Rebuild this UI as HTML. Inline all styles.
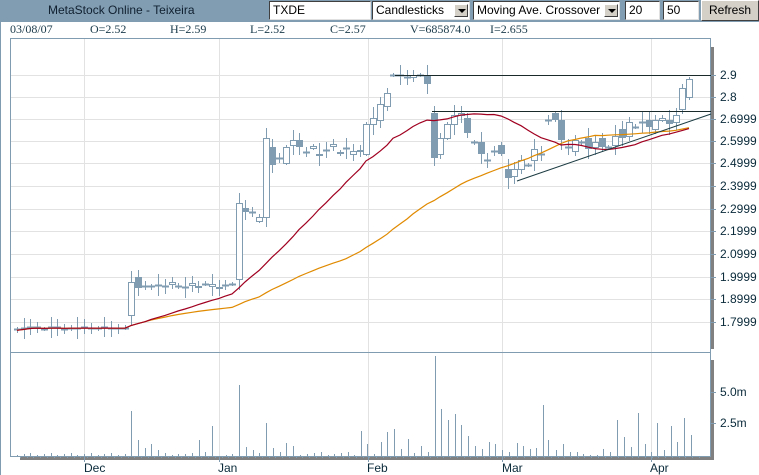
<!DOCTYPE html>
<html><head><meta charset="utf-8"><style>
body{margin:0;width:759px;height:475px;overflow:hidden;background:#fff;font-family:"Liberation Sans",sans-serif;position:relative}
.bar{position:absolute;left:0;top:0;width:759px;height:21px;background:#819db2}
.title{position:absolute;left:48px;top:3px;font-size:12px;color:#102030}
.box{position:absolute;top:1px;height:19px;background:#fff;border:1px solid;border-color:#404040 #e0e0e0 #e0e0e0 #404040;box-sizing:border-box;font-size:12px;padding:1px 3px;color:#000}
.arr{position:absolute;top:2px;right:1px;width:14px;height:13px;background:#d4d0c8;border:1px solid;border-color:#fff #404040 #404040 #fff;box-sizing:border-box}
.arr:after{content:"";position:absolute;left:3px;top:4px;border:4px solid transparent;border-top:4px solid #000;border-bottom:0}
.btn{position:absolute;left:701px;top:0;width:58px;height:21px;background:#d4d0c8;border:1px solid;border-color:#fff #404040 #404040 #fff;box-sizing:border-box;font-size:12px;text-align:center;line-height:18px}
.info{position:absolute;top:22px;font-family:"Liberation Serif",serif;font-size:12px;color:#1a3a4a}
.lab{position:absolute;font-size:12px;color:#0a2a3a}
</style></head><body>
<div class="bar"><div class="title">MetaStock Online - Teixeira</div></div>
<div class="box" style="left:269px;width:102px">TXDE</div>
<div class="box" style="left:372px;width:98px">Candlesticks<div class="arr"></div></div>
<div class="box" style="left:473px;width:147px">Moving Ave. Crossover<div class="arr"></div></div>
<div class="box" style="left:625px;width:35px">20</div>
<div class="box" style="left:663px;width:36px">50</div>
<div class="btn">Refresh</div>
<div class="info" style="left:10px">03/08/07</div>
<div class="info" style="left:90px">O=2.52</div>
<div class="info" style="left:170px">H=2.59</div>
<div class="info" style="left:250px">L=2.52</div>
<div class="info" style="left:330px">C=2.57</div>
<div class="info" style="left:410px">V=685874.0</div>
<div class="info" style="left:490px">I=2.655</div>
<svg id="s" width="759" height="475" style="position:absolute;left:0;top:0" shape-rendering="crispEdges"></svg>
<div class="lab" style="left:720px;top:68px">2.9</div>
<div class="lab" style="left:720px;top:90px">2.8</div>
<div class="lab" style="left:720px;top:112px">2.6999</div>
<div class="lab" style="left:720px;top:134px">2.5999</div>
<div class="lab" style="left:720px;top:156px">2.4999</div>
<div class="lab" style="left:720px;top:179px">2.3999</div>
<div class="lab" style="left:720px;top:202px">2.2999</div>
<div class="lab" style="left:720px;top:224px">2.1999</div>
<div class="lab" style="left:720px;top:247px">2.0999</div>
<div class="lab" style="left:720px;top:270px">1.9999</div>
<div class="lab" style="left:720px;top:292px">1.8999</div>
<div class="lab" style="left:720px;top:315px">1.7999</div>
<div class="lab" style="left:720px;top:385px">5.0m</div>
<div class="lab" style="left:720px;top:416px">2.5m</div>
<div class="lab" style="left:84px;top:461px">Dec</div>
<div class="lab" style="left:218px;top:461px">Jan</div>
<div class="lab" style="left:367px;top:461px">Feb</div>
<div class="lab" style="left:502px;top:461px">Mar</div>
<div class="lab" style="left:650px;top:461px">Apr</div>
<script>
var s=document.getElementById('s'),h='';
function L(x1,y1,x2,y2,c,w){h+='<line x1="'+x1+'" y1="'+y1+'" x2="'+x2+'" y2="'+y2+'" stroke="'+c+'" stroke-width="'+(w||1)+'"/>';}
function R(x,y,w,hh,f,st){h+='<rect x="'+x+'" y="'+y+'" width="'+w+'" height="'+hh+'" fill="'+f+'" stroke="'+(st||'none')+'"/>';}
function Y(p){return 75+(2.9-p)*224.7;}
var gy=[75,97,119,141,163,186,209,231,254,277,299,322];
gy.forEach(function(y){L(10,y+.5,710,y+.5,'#e2e2e2');});
[84,219,368,502,651].forEach(function(x){L(x+.5,38,x+.5,456,'#e2e2e2');});
L(0.5,21,0.5,475,'#7f9cb0');
L(0,21.5,759,21.5,'#7f9cb0');
L(10,38.5,711,38.5,'#7f9cb0');
L(10.5,38,10.5,456,'#7f9cb0');
L(710.5,38,710.5,456,'#7f9cb0');
L(10,352.5,711,352.5,'#7f9cb0');
L(10,456.5,711,456.5,'#7f9cb0');
R(711,47,3,302,'#808080');R(711,360,3,98,'#808080');R(20,457,694,3,'#808080');
gy.forEach(function(y){L(711,y+.5,716,y+.5,'#7f9cb0');});
L(711,392.5,716,392.5,'#7f9cb0');L(711,423.5,716,423.5,'#7f9cb0');
[84,219,368,502,651].forEach(function(x){L(x+.5,456,x+.5,462,'#7f9cb0');});
for(var tx=20;tx<705;tx+=6.72)L(Math.round(tx)+.5,456,Math.round(tx)+.5,458,'#7f9cb0');
var d=[];
for(var i=0;i<17;i++){var b=1.768+((i*37)%7)*0.002;d.push([b,b+((i%3)-1)*0.004]);}
d.push([1.83,1.98],[2.0,1.95]);
for(i=19;i<32;i++){var b=1.955+((i*13)%5)*0.004;d.push([b,b+((i%3)-1)*0.006]);}
d.push([1.97,1.97],[1.99,2.33],[2.31,2.29],[2.29,2.29],[2.25,2.27],[2.27,2.62],[2.58,2.50],[2.53,2.53],[2.51,2.58],[2.59,2.61],[2.61,2.58]);
for(i=43;i<52;i++){var b=2.55+((i*17)%5)*0.008;d.push([b,b+((i%3)-1)*0.01]);}
d.push([2.55,2.68],[2.68,2.71],[2.70,2.77],[2.76,2.82],[2.9,2.9],[2.9,2.9],[2.89,2.89],[2.89,2.9],[2.9,2.9],[2.9,2.86],
[2.73,2.53],[2.55,2.62],[2.62,2.68],[2.68,2.72],[2.72,2.73],[2.71,2.64],[2.6,2.6],[2.6,2.55],[2.52,2.52],[2.56,2.56],[2.59,2.55],
[2.48,2.44],[2.45,2.48],[2.48,2.52],[2.50,2.50],[2.52,2.57],[2.55,2.55],[2.7,2.7],[2.73,2.70],[2.70,2.61],[2.58,2.58],[2.56,2.61],[2.6,2.6],
[2.62,2.57],[2.58,2.60],[2.62,2.58],[2.58,2.58],[2.59,2.63],[2.66,2.62],[2.63,2.69],[2.67,2.67],[2.69,2.69],[2.70,2.67],[2.66,2.70],[2.70,2.71],
[2.70,2.68],[2.69,2.72],[2.75,2.84],[2.80,2.88]);
var X=function(i){return Math.round(17+i*6.72);};
var C='#7f9cb0',cl=d.map(function(a){return a[1];});
function ma(n){var pts=[];for(var i=0;i<cl.length;i++){var s0=Math.max(0,i-n+1),sum=0;for(var j=s0;j<=i;j++)sum+=cl[j];pts.push(X(i)+','+Y(sum/(i-s0+1)).toFixed(1));}return pts.join(' ');}
d.forEach(function(a,i){var x=X(i),o=a[0],c=a[1],hi=Math.max(o,c)+0.01+((i*7)%4)*0.012,lo=Math.min(o,c)-0.01-((i*11)%4)*0.012;
L(x+.5,Math.round(Y(hi)),x+.5,Math.round(Y(lo)),C,1);
var t=Math.round(Y(Math.max(o,c))),bt=Math.round(Y(Math.min(o,c)));
if(bt-t<2){L(x-3,t+.5,x+4,t+.5,C,2);}
else if(c>o)R(x-2.5,t+.5,6,bt-t,'#fff',C);else R(x-3,t,7,bt-t,C);});
h+='<polyline points="'+ma(50)+'" fill="none" stroke="#e08a00" stroke-width="1.2" shape-rendering="auto"/>';
h+='<polyline points="'+ma(20)+'" fill="none" stroke="#a00020" stroke-width="1.2" shape-rendering="auto"/>';
L(395,75.5,711,75.5,'#1a2a2a');L(432,111.5,711,111.5,'#1a2a2a');
h+='<line x1="517" y1="181" x2="711" y2="114" stroke="#1a3a40" shape-rendering="auto"/>';
var v=[[131,45],[138,16],[145,8],[151,12],[158,6],[165,3],[185,2],[199,16],[212,30],[239,71],[246,9],[253,6],[266,33],[273,8],[286,13],[293,10],[361,25],[367,12],[381,14],[387,24],[394,27],[401,7],[408,17],[421,10],[435,100],[441,47],[448,36],[455,42],[461,31],[468,20],[475,10],[482,7],[489,14],[495,12],[502,6],[509,4],[517,13],[523,10],[530,7],[536,8],[543,51],[548,16],[556,6],[563,12],[570,4],[577,4],[583,2],[590,1],[597,1],[603,7],[610,4],[617,36],[624,19],[631,9],[638,43],[645,12],[651,4],[657,33],[664,6],[671,30],[677,14],[684,38],[691,21]];
for(var k=0;k<17;k++)v.push([X(k),1+(k%3)]);
[172,178,192,205,226,232,259,280,300,307,314,321,328,334,341,348,354,374,414,428].forEach(function(x,k){v.push([x,1+(k%4)]);});
v.forEach(function(a){L(a[0]+.5,456-a[1],a[0]+.5,456,C,1);});
s.innerHTML=h;
</script>
</body></html>
